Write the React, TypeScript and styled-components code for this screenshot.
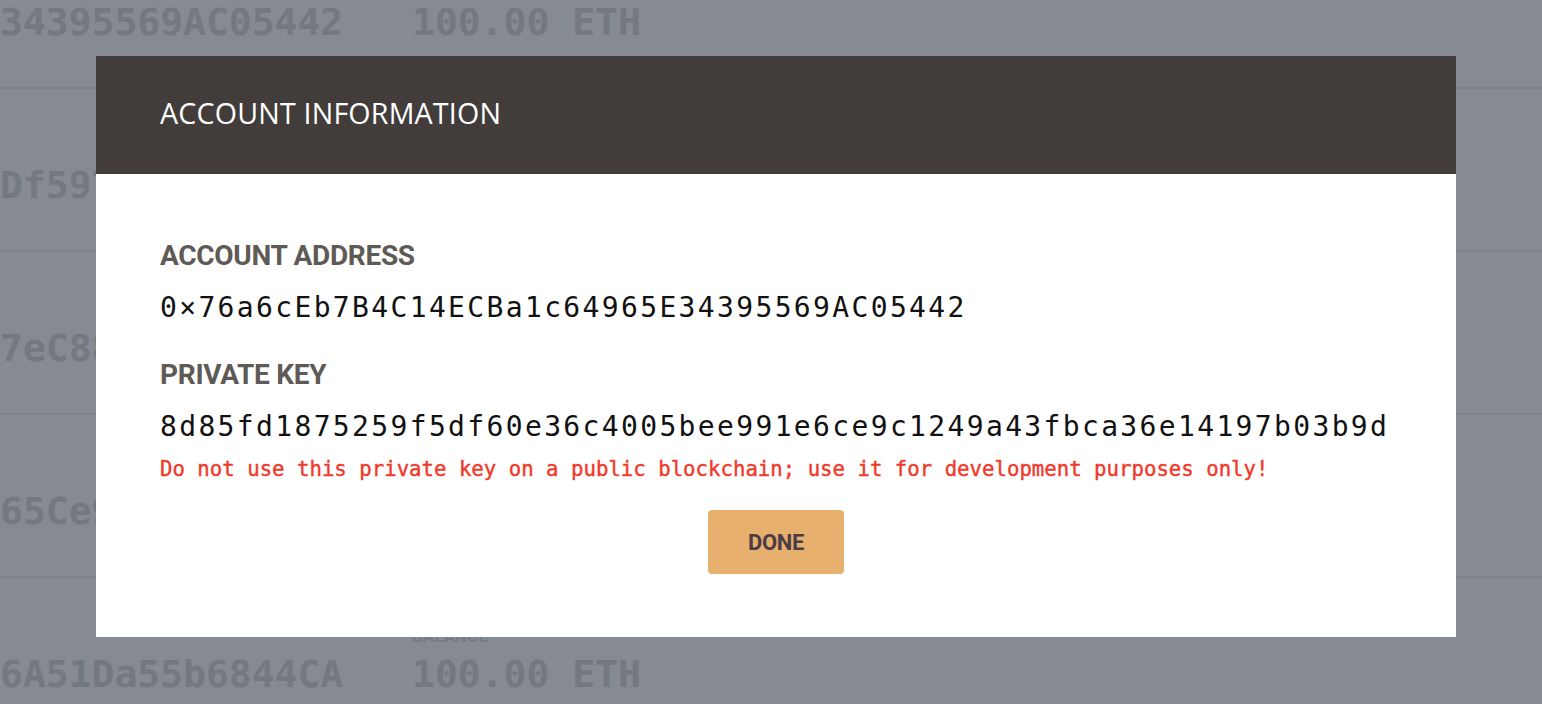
import React from "react";
import styled, { createGlobalStyle } from "styled-components";

const GlobalStyle = createGlobalStyle`
  html, body {
    margin: 0;
    padding: 0;
    width: 1542px;
    height: 704px;
    overflow: hidden;
    background: #868a92;
  }
  * { box-sizing: border-box; }
`;

const Page = styled.div`
  width: 1542px;
  height: 778px;
  overflow: hidden;
  background: #868a92;
  display: flex;
  flex-direction: column;
  margin-top: -74px;
`;

const Row = styled.div`
  flex: 0 0 163px;
  border-bottom: 2px solid #7e828a;
  display: grid;
  grid-template-columns: 412px 1fr;
  align-content: end;
  padding-bottom: 42px;
`;

const Cell = styled.div`
  display: flex;
  flex-direction: column;
  overflow: hidden;
`;

const CellLabel = styled.div`
  font-family: "Roboto", sans-serif;
  font-weight: 700;
  font-size: 17px;
  color: #777b82;
  height: 22px;
  line-height: 22px;
  margin-bottom: 4px;
`;

const CellValue = styled.div`
  font-family: "DejaVu Sans Mono", monospace;
  font-weight: 700;
  font-size: 38px;
  line-height: 46px;
  color: #74787f;
  white-space: nowrap;
`;

const Overlay = styled.div`
  position: fixed;
  inset: 0;
  display: flex;
  align-items: flex-start;
  padding: 56px 0 0 96px;
`;

const Modal = styled.div`
  width: 1360px;
  height: 581px;
  background: #ffffff;
  display: flex;
  flex-direction: column;
`;

const Header = styled.div`
  height: 118px;
  background: #423d3a;
  display: flex;
  align-items: center;
  padding: 0 64px 6px;
`;

const Title = styled.h2`
  margin: 0;
  font-family: "Open Sans", sans-serif;
  font-weight: 400;
  font-size: 28.6px;
  color: #ffffff;
  letter-spacing: 0.2px;
`;

const Body = styled.div`
  padding: 64px 64px 0;
  display: flex;
  flex-direction: column;
`;

const Label = styled.h3<{ $gap?: number }>`
  margin: ${(p) => p.$gap ?? 0}px 0 0;
  font-family: "Roboto", sans-serif;
  font-weight: 700;
  font-size: 28px;
  line-height: 36px;
  color: #5e5a56;
  letter-spacing: -0.3px;
`;

const Mono = styled.div`
  margin-top: 16px;
  font-family: "DejaVu Sans Mono", monospace;
  font-size: 28px;
  line-height: 36px;
  letter-spacing: 2.35px;
  color: #111111;
  white-space: nowrap;
`;

const Warning = styled.div`
  margin-top: 11px;
  font-family: "DejaVu Sans Mono", monospace;
  font-size: 20.7px;
  line-height: 26px;
  color: #f0392b;
  -webkit-text-stroke: 0.4px #f0392b;
  white-space: nowrap;
`;

const Actions = styled.div`
  display: flex;
  justify-content: center;
  margin-top: 28px;
`;

const Button = styled.button`
  width: 136px;
  height: 64px;
  border: none;
  border-radius: 4px;
  background: #e8b06f;
  color: #4b3d43;
  font-family: "Roboto", sans-serif;
  font-weight: 700;
  font-size: 22px;
  letter-spacing: -0.3px;
  cursor: pointer;
`;

const rows = [
  { addr: "34395569AC05442", bal: "100.00 ETH", label: "BALANCE" },
  { addr: "Df597a1C3b5E6d2F8", bal: "100.00 ETH", label: "BALANCE" },
  { addr: "7eC88b2E41aD9f0C3", bal: "100.00 ETH", label: "BALANCE" },
  { addr: "65Ce9A4b7D1e3F0a2", bal: "100.00 ETH", label: "BALANCE" },
  { addr: "6A51Da55b6844CA", bal: "100.00 ETH", label: "BALANCE" },
];

export default function App() {
  return (
    <>
      <GlobalStyle />
      <Page>
        {rows.map((r, i) => (
          <Row key={i}>
            <Cell>
              <CellLabel>&nbsp;</CellLabel>
              <CellValue>{r.addr}</CellValue>
            </Cell>
            <Cell>
              <CellLabel>{r.label}</CellLabel>
              <CellValue>{r.bal}</CellValue>
            </Cell>
          </Row>
        ))}
      </Page>
      <Overlay>
        <Modal role="dialog" aria-label="Account information">
          <Header>
            <Title>ACCOUNT INFORMATION</Title>
          </Header>
          <Body>
            <Label>ACCOUNT ADDRESS</Label>
            <Mono>0×76a6cEb7B4C14ECBa1c64965E34395569AC05442</Mono>
            <Label $gap={31}>PRIVATE KEY</Label>
            <Mono>8d85fd1875259f5df60e36c4005bee991e6ce9c1249a43fbca36e14197b03b9d</Mono>
            <Warning>
              Do not use this private key on a public blockchain; use it for development purposes only!
            </Warning>
            <Actions>
              <Button>DONE</Button>
            </Actions>
          </Body>
        </Modal>
      </Overlay>
    </>
  );
}
